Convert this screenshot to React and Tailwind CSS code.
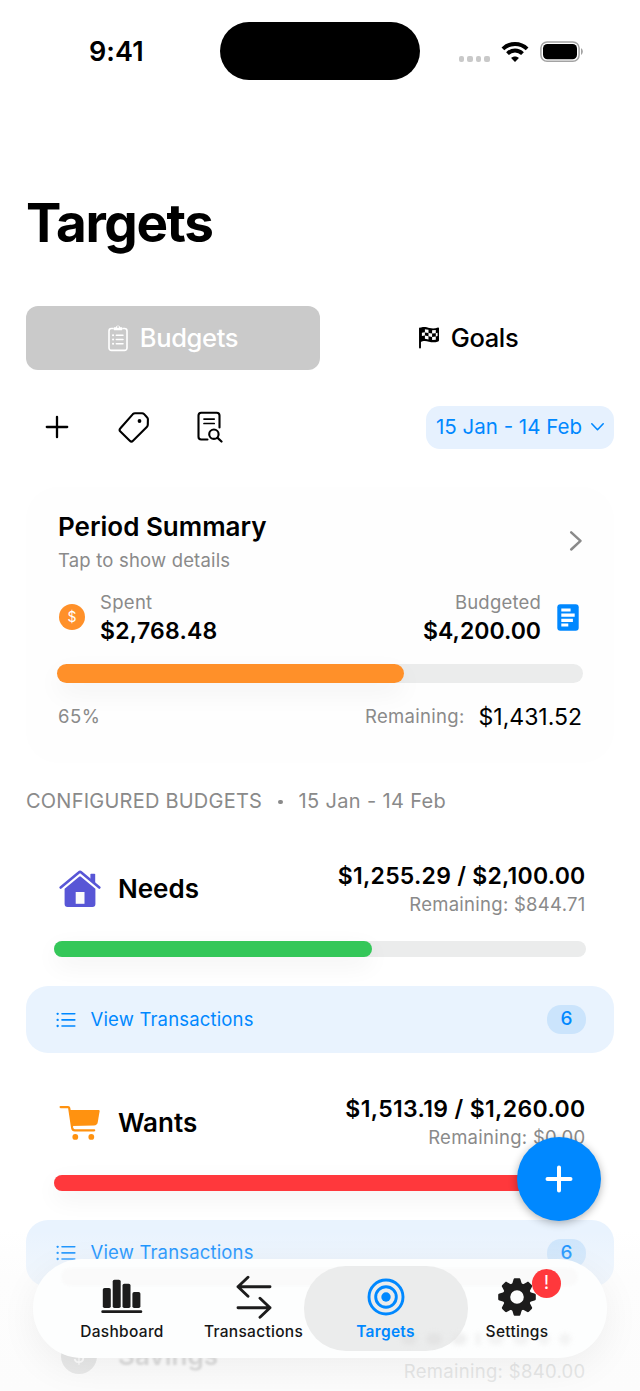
import React from "react";

const FONT = "font-['Inter','Liberation_Sans',sans-serif]";

function Wifi() {
  return (
    <svg width="28" height="22" viewBox="0 0 28 22" fill="none" stroke="#000" strokeWidth="3.9">
      <path d="M1.9 7.9C8.6 1.3 19.4 1.3 26.1 7.9" />
      <path d="M6.5 12.6c4.2-4.1 10.800-4.100 15 0" />
      <path d="M14 21l-3.900-4c2.200-2 5.600-2 7.800 0z" fill="#000" stroke="none" />
    </svg>
  );
}

function Battery() {
  return (
    <svg width="43" height="22" viewBox="0 0 43 22">
      <rect x="0.9" y="0.9" width="38.2" height="19.4" rx="6.2" fill="none" stroke="#a3a3a3" strokeWidth="1.5" />
      <rect x="3" y="3" width="34" height="15.2" rx="4.4" fill="#000" />
      <path d="M41 7.2c2.4 1 2.4 5.8 0 6.8z" fill="#a3a3a3" />
    </svg>
  );
}

function Clipboard() {
  return (
    <svg width="20" height="28" viewBox="0 0 20 28" fill="none" stroke="#fff" strokeWidth="1.6" strokeLinecap="round">
      <path d="M5 4.500H3.400A2.400 2.400 0 0 0 1 6.900V24a2.400 2.400 0 0 0 2.400 2.400h13.200A2.400 2.400 0 0 0 19 24V6.900A2.400 2.400 0 0 0 16.600 4.500H15" />
      <path d="M6.600 3.200h1.200a2.300 2.300 0 0 1 4.400 0h1.200c.7 0 1 .5 1 1v1c0 .6-.4 1-1 1H6.600c-.6 0-1-.4-1-1v-1c0-.5.3-1 1-1z" fill="#fff" stroke="none" />
      <circle cx="10" cy="3" r="0.9" fill="#cacaca" stroke="none" />
      <path d="M8.300 11.200h6.700M8.300 15.500h6.700M8.300 19.700h6.700" strokeWidth="1.500" />
      <path d="M5 11.200h.1M5 15.500h.1M5 19.700h.1" strokeWidth="2" />
    </svg>
  );
}

function Flag() {
  return (
    <svg width="22" height="23" viewBox="0 0 22 23">
      <path d="M2 21.500V2.500" stroke="#000" strokeWidth="1.900" strokeLinecap="round" />
      <path d="M1.500 2.300C5 0 8.500 1.200 11.500 2c3 .8 5.500.6 8.500-.4.500-.2 1 .1 1 .7v12c0 .6-.3.900-.800 1.100-3.200 1.200-6 1.200-9.200.4-3-.8-5.500-1.200-9 .6z" fill="#000" />
      <g fill="#fff">
        <path d="M6.900 3.200l3.600.6v3.200l-3.600-.6z M14.100 4.300l3.700-.4v3.300l-3.700.4z" />
        <path d="M3.900 6.800l3-.6v3.200l-3 .6z M10.500 7l3.600.6v3.300l-3.600-.6z M17.800 7.200l1.800-.5v3.300l-1.800.5z" />
        <path d="M6.900 9.600l3.600.6v3.200l-3.600-.6z M14.100 10.900l3.700-.4v3.200l-3.700.4z" />
      </g>
    </svg>
  );
}

function Plus() {
  return (
    <svg width="24" height="24" viewBox="0 0 24 24" stroke="#000" strokeWidth="2.300" strokeLinecap="round">
      <path d="M12 1.800v20.400M1.800 12h20.400" />
    </svg>
  );
}

function Tag() {
  return (
    <svg width="32" height="32" viewBox="0 0 32 32" fill="none" stroke="#000" strokeWidth="2.100" strokeLinejoin="round">
      <path d="M17 2.200h7.200c.7 0 1.200.2 1.700.7l3.300 3.600c.5.500.7 1.100.7 1.800l-.1 5.500c0 .9-.3 1.600-1 2.300L15 29.800c-1 1-2.200 1-3.200 0L2.400 20.500c-1-1-1-2.200 0-3.200L14.900 3.100c.6-.6 1.200-.9 2.100-.9z" />
      <circle cx="21.500" cy="10" r="1.900" fill="#000" stroke="none" />
    </svg>
  );
}

function DocSearch() {
  return (
    <svg width="26" height="32" viewBox="0 0 26 32" fill="none" stroke="#000" strokeWidth="2.100" strokeLinecap="round">
      <path d="M10.500 28.500H4.200A2.800 2.800 0 0 1 1.500 25.700V4.600A2.800 2.800 0 0 1 4.200 1.800H19.700A2.800 2.800 0 0 1 22.500 4.600V16.500" />
      <path d="M7 8.100h10.200M7 12.500h10.200" strokeWidth="1.700" />
      <circle cx="16.900" cy="23.200" r="4.700" />
      <path d="M20.600 26.900l3.900 3.600" strokeWidth="2.200" />
    </svg>
  );
}

function Coin({ size, color }) {
  return (
    <svg width={size} height={size} viewBox="0 0 26 26" className="block shrink-0">
      <circle cx="13" cy="13" r="13" fill={color} />
      <text x="13" y="18" textAnchor="middle" fontSize="14" fontWeight="400" fill="#fff" fontFamily="Inter, sans-serif">$</text>
    </svg>
  );
}

function BudgetDoc() {
  return (
    <svg width="22" height="27" viewBox="0 0 22 27">
      <rect x="0.300" y="0.200" width="21.400" height="26.600" rx="3" fill="#0088ff" />
      <path d="M4.300 4.500h9.300v3.100H4.300zM4.300 9.500h13.400v3.300H4.300zM4.300 14.700h11.600v3.200H4.300zM4.300 19.600h7v3H4.300z" fill="#fff" />
    </svg>
  );
}

function House() {
  return (
    <svg width="42" height="38" viewBox="0 0 42 38">
      <path d="M32.200 3.800h3.200c.5 0 .8.300.8.800v9.500l-4.800-4V4.600c0-.5.3-.8.800-.8z" fill="#5856d6" />
      <path d="M1.700 17.500L19.800 2.400c.8-.7 1.700-.7 2.500 0l18 15.100" fill="none" stroke="#5856d6" strokeWidth="2.600" strokeLinecap="round" />
      <path d="M5.600 18.800L19.800 6.900c.8-.6 1.600-.6 2.400 0l14.200 11.900V34c0 2-1 3-3 3H8.600c-2 0-3-1-3-3z" fill="#5856d6" />
      <rect x="16.700" y="22" width="8.800" height="11.800" fill="#fbfbfb" />
    </svg>
  );
}

function Cart() {
  return (
    <svg width="42" height="36" viewBox="0 0 42 36">
      <path d="M1.600 2.100h7.500c.7 0 1 .3 1.100.9l3 20c.3 1.600 1 2.300 2.600 2.300h19.400" fill="none" stroke="#ff9210" strokeWidth="2.200" strokeLinecap="round" strokeLinejoin="round" />
      <path d="M10.200 5h29.300c.8 0 1.200.5 1.100 1.300l-1.800 10.700c-.4 2.300-1.600 3.400-3.900 3.600L12.600 21z" fill="#ff9210" />
      <circle cx="16.300" cy="31.900" r="2.900" fill="#ff9210" />
      <circle cx="32.300" cy="31.900" r="2.900" fill="#ff9210" />
    </svg>
  );
}

function ListIcon() {
  return (
    <svg width="20" height="16" viewBox="0 0 20 16" stroke="#0088ff" strokeWidth="1.600" strokeLinecap="round">
      <path d="M6 1.800h12.800M6 7.900h12.800M6 14h12.800" />
      <path d="M1.600 1.800h.1M1.600 7.900h.1M1.600 14h.1" strokeWidth="2.300" />
    </svg>
  );
}

function DashboardIcon() {
  return (
    <svg width="42" height="36" viewBox="0 0 42 36" fill="#1c1c1c">
      <rect x="1.800" y="9" width="8" height="20" rx="1.800" />
      <rect x="11.700" y="0.800" width="8" height="28.200" rx="1.800" />
      <rect x="21.500" y="4.800" width="8" height="24.200" rx="1.800" />
      <rect x="31.400" y="13" width="8" height="16" rx="1.800" />
      <rect x="0.300" y="31.300" width="41" height="2.800" rx="1.400" />
    </svg>
  );
}

function ArrowsIcon() {
  return (
    <svg width="36" height="44" viewBox="0 0 36 44" fill="none" stroke="#1c1c1c" strokeWidth="2.900" strokeLinecap="round" strokeLinejoin="round">
      <path d="M34 11.700H2M12 2.200L2 11.700l10 9.500" />
      <path d="M2 32.700h32M24 23.200l10 9.500-10 9.500" />
    </svg>
  );
}

function TargetIcon() {
  return (
    <svg width="38" height="38" viewBox="0 0 38 38" fill="none" stroke="#0088ff" strokeWidth="2.900">
      <circle cx="19" cy="19" r="17" />
      <circle cx="19" cy="19" r="10.300" />
      <circle cx="19" cy="19" r="4.700" fill="#0088ff" stroke="none" />
    </svg>
  );
}

const TEETH = [0, 45, 90, 135, 180, 225, 270, 315];

function GearIcon() {
  return (
    <svg width="40" height="40" viewBox="0 0 40 40" fill="#1c1c1c">
      {TEETH.map((a) => (
        <path key={a} transform={`rotate(${a} 20 20)`} d="M15 7.500l1.500-5c.2-.900.700-1.300 1.500-1.300h4c.8 0 1.300.4 1.500 1.300l1.500 5z" />
      ))}
      <circle cx="20" cy="20" r="10.500" fill="none" stroke="#1c1c1c" strokeWidth="7.400" />
    </svg>
  );
}

function StatusBar() {
  return (
    <header className="flex h-[104px] shrink-0 items-center">
      <div className="w-[220px] pl-[89px] text-[27px] font-semibold leading-8 tracking-[0.100px]">9:41</div>
      <div className="mb-[2px] h-[58px] w-[200px] rounded-[29px] bg-black" />
      <div className="ml-[39px] mt-[13px] flex gap-[3.300px]">
        <span className="h-[6px] w-[5.200px] rounded-[2px] bg-[#c9c9c9]" />
        <span className="h-[6px] w-[5.200px] rounded-[2px] bg-[#c9c9c9]" />
        <span className="h-[6px] w-[5.200px] rounded-[2px] bg-[#c9c9c9]" />
        <span className="h-[6px] w-[5.200px] rounded-[2px] bg-[#c9c9c9]" />
      </div>
      <div className="ml-[11px]"><Wifi /></div>
      <div className="ml-[11px]"><Battery /></div>
    </header>
  );
}

function Summary() {
  return (
    <section className="mt-[38px] h-[276px] rounded-[32px] bg-[#fefefe] px-8 pt-[24.500px]">
      <div className="flex items-center justify-between">
        <div>
          <h2 className="h-[30px] text-[26px] font-semibold leading-[30px] tracking-normal">Period Summary</h2>
          <p className="mt-[6px] h-6 text-[18.500px] leading-6 tracking-[0.180px] text-[#8a8a8a]">Tap to show details</p>
        </div>
        <svg className="-mr-[1px] mb-[2px]" width="14" height="22" viewBox="0 0 14 22" fill="none" stroke="#8a8a8a" strokeWidth="2.500" strokeLinecap="round" strokeLinejoin="round">
          <path d="M2.200 2.300l9.300 8.600-9.300 8.600" />
        </svg>
      </div>
      <div className="mt-[18px] flex items-center">
        <div className="mb-[1px] ml-[1px]"><Coin size={26} color="#ff9029" /></div>
        <div className="ml-[15px] flex-1">
          <p className="h-6 text-[18.500px] leading-6 tracking-[0.300px] text-[#8a8a8a]">Spent</p>
          <p className="mt-[2px] h-[30px] text-[23px] font-semibold leading-[30px] tracking-[0.250px]">$2,768.48</p>
        </div>
        <div className="mr-[16px] text-right">
          <p className="h-6 text-[18.500px] leading-6 tracking-[0.200px] text-[#8a8a8a]">Budgeted</p>
          <p className="mt-[2px] h-[30px] text-[23px] font-semibold leading-[30px]">$4,200.00</p>
        </div>
        <div className="mr-[3px]"><BudgetDoc /></div>
      </div>
      <div className="-ml-[1px] mr-[-1px] mt-[18.500px] h-[19px] rounded-full bg-[#ebecec]">
        <div className="h-full w-[347px] rounded-full bg-[#ff9029] shadow-[0_10px_26px_rgba(0,0,0,0.050)]" />
      </div>
      <div className="mt-[19px] flex h-[30px] items-center whitespace-nowrap">
        <span className="flex-1 text-[18.500px] tracking-[0.500px] text-[#8a8a8a]">65%</span>
        <span className="text-[18.500px] tracking-[0.300px] text-[#8a8a8a]">Remaining:</span>
        <span className="ml-[14px] text-[23px]">$1,431.52</span>
      </div>
    </section>
  );
}

function BudgetCard({ icon, name, amount, amountClass, remaining, fill, color, count }) {
  return (
    <section className="flex h-[215px] shrink-0 flex-col rounded-[28px]">
      <div className="h-[148px] px-7 pt-[22px]">
        <div className="flex h-[58px] items-center">
          <div className="ml-[4.500px] w-[60.500px]">{icon}</div>
          <h3 className="-ml-[1px] flex-1 text-[26px] font-semibold leading-8 tracking-normal">{name}</h3>
          <div className="mr-[0.500px] text-right">
            <p className={"h-[30px] whitespace-nowrap text-[23px] font-semibold leading-[30px] " + amountClass}>{amount}</p>
            <p className="h-[27px] whitespace-nowrap text-[18.500px] leading-[27px] tracking-[0.270px] text-[#8a8a8a]">Remaining: {remaining}</p>
          </div>
        </div>
        <div className="mt-[23px] h-4 rounded-full bg-[#ebecec]">
          <div className="h-full rounded-full shadow-[0_8px_24px_rgba(0,0,0,0.060)]" style={{ width: fill, background: color }} />
        </div>
      </div>
      <div className="flex h-[67px] items-center rounded-[22px] bg-[#e9f3fe] pl-[29.500px] pr-[29px] text-[#0088ff]">
        <ListIcon />
        <span className="ml-[15px] flex-1 text-[18.500px] tracking-[0.170px]">View Transactions</span>
        <span className="-mr-[1px] flex h-[29px] w-[39px] items-center justify-center rounded-[14px] bg-[#cbe4fc] text-[19px] font-medium">{count}</span>
      </div>
    </section>
  );
}

function NavItem({ icon, label, className }) {
  return (
    <div className={"absolute flex flex-col items-center " + className}>
      <div className="flex h-[50px] items-center">{icon}</div>
      <span className="mt-[-0.500px] h-5 whitespace-nowrap text-[15.500px] font-medium leading-5 tracking-[0.300px]">{label}</span>
    </div>
  );
}

export default function App() {
  return (
    <div className={"relative flex h-[1391px] w-[640px] flex-col overflow-hidden bg-white text-black " + FONT}>
      <StatusBar />
      <main className="flex shrink-0 flex-col px-[26px]">
        <h1 className="mt-[89px] h-[61px] text-[53px] font-bold leading-[61px] tracking-[-1.400px]">Targets</h1>
        <div className="mt-[51.500px] flex h-16 text-[25.500px] font-medium tracking-[-0.350px]">
          <div className="flex w-[294px] items-center justify-center gap-[12px] rounded-xl bg-[#cacaca] text-white">
            <Clipboard />
            <span className="mt-[1px]">Budgets</span>
          </div>
          <div className="flex w-[294px] items-center justify-center gap-[11px] pl-[2px]">
            <Flag />
            <span className="mt-[1px]">Goals</span>
          </div>
        </div>
        <div className="mt-9 flex h-[43.500px] items-center">
          <div className="ml-[19px]"><Plus /></div>
          <div className="ml-[49px]"><Tag /></div>
          <div className="ml-[47px]"><DocSearch /></div>
          <div className="ml-auto flex h-full w-[188px] items-center rounded-[14px] bg-[#e6f1fe] pl-[10px] text-[#0088ff]">
            <span className="mt-[1px] whitespace-nowrap text-[20.500px]">15 Jan - 14 Feb</span>
            <svg className="ml-auto mr-[9px]" width="15" height="10" viewBox="0 0 15 10" fill="none" stroke="#0088ff" strokeWidth="1.600" strokeLinecap="round" strokeLinejoin="round">
              <path d="M1.800 1.800l5.700 5.900 5.700-5.900" />
            </svg>
          </div>
        </div>
        <Summary />
        <div className="mt-[26px] flex h-6 items-center whitespace-nowrap text-[20px] tracking-[0.230px] text-[#8a8a8a]">
          <span className="w-[236px]">CONFIGURED BUDGETS</span>
          <span className="mx-[16px] mt-[2px] h-[4.500px] w-[4.500px] rounded-full bg-[#8a8a8a]" />
          <span className="tracking-[0.350px]">15 Jan - 14 Feb</span>
        </div>
        <div className="mt-[25px] flex flex-col gap-[18.500px]">
          <BudgetCard icon={<House />} name="Needs" amount="$1,255.29 / $2,100.00" amountClass="tracking-[0.250px]" remaining="$844.71" fill="318px" color="#34c759" count="6" />
          <BudgetCard icon={<Cart />} name="Wants" amount="$1,513.19 / $1,260.00" amountClass="tracking-[0.350px]" remaining="$0.00" fill="532px" color="#ff383c" count="6" />
          <div className="flex h-[120px] px-7 pt-[22px]">
            <div className="ml-[7px] mt-[11px] w-[58px] opacity-60 blur-[0.400px]"><Coin size={36} color="#b5b7b7" /></div>
            <h3 className="-ml-[1px] mt-[13px] flex-1 text-[26px] font-semibold leading-8 tracking-normal text-[#b4b4b4] blur-[0.800px]">Savings</h3>
            <p className="mr-[0.500px] mt-[31px] text-[18.500px] leading-[27px] tracking-[0.300px] text-[#cbcdcd]">Remaining: $840.00</p>
          </div>
        </div>
      </main>

      <div className="pointer-events-none absolute inset-x-0 bottom-0 h-[161px] bg-linear-to-b from-white/0 via-[#fafafa]/40 via-30% to-[#fafafa]/60" />

      <div className="absolute left-[517px] top-[1137px] flex h-[84px] w-[84px] items-center justify-center rounded-full bg-[#0088ff] shadow-[0_2px_9px_rgba(0,0,0,0.300)]">
        <svg width="30" height="30" viewBox="0 0 30 30" stroke="#fff" strokeWidth="4" strokeLinecap="round">
          <path d="M15 3.500v23M3.500 15h23" />
        </svg>
      </div>

      <nav className="absolute left-[33px] top-[1259px] h-[98.500px] w-[574px] rounded-[49px] bg-[#fdfefe] shadow-[0_10px_38px_rgba(0,0,0,0.060)]">
        <div className="absolute left-[28px] top-[9px] h-[18px] w-[517px] rounded-[9px] bg-[#fafafa] blur-[1px]" />
        <div className="absolute left-[271px] top-[7px] h-[85px] w-[164px] rounded-[42px] bg-[#ebecec]" />
        <div className="absolute left-[368px] top-[74px] flex w-[170px] items-center justify-between opacity-60 blur-[2.500px]">
          <span className="h-3 w-4 rounded-full bg-[#dedede]" />
          <span className="h-3 w-4 rounded-full bg-[#dedede]" />
          <span className="h-3 w-4 rounded-full bg-[#e6e6e6]" />
          <span className="h-3 w-1 bg-[#e6e6e6]" />
          <span className="h-3 w-4 rounded-full bg-[#ededed]" />
          <span className="h-3 w-4 rounded-full bg-[#ededed]" />
          <span className="h-3 w-3 rounded-full bg-[#ededed]" />
          <span className="h-3 w-3 rounded-full bg-[#ededed]" />
        </div>
        <NavItem className="left-[29px] top-[13px] w-[120px] text-[#161616]" icon={<DashboardIcon />} label="Dashboard" />
        <NavItem className="left-[160.500px] top-[13px] w-[120px] text-[#161616]" icon={<ArrowsIcon />} label="Transactions" />
        <NavItem className="left-[292.500px] top-[13px] w-[120px] text-[#0088ff]" icon={<TargetIcon />} label={<b className="font-semibold">Targets</b>} />
        <NavItem className="left-[424px] top-[13px] w-[120px] text-[#161616]" icon={<GearIcon />} label="Settings" />
        <div className="absolute left-[499px] top-[10px] flex h-[29px] w-[29px] items-center justify-center rounded-full bg-[#ff383c] text-[19px] text-white">!</div>
      </nav>
    </div>
  );
}
